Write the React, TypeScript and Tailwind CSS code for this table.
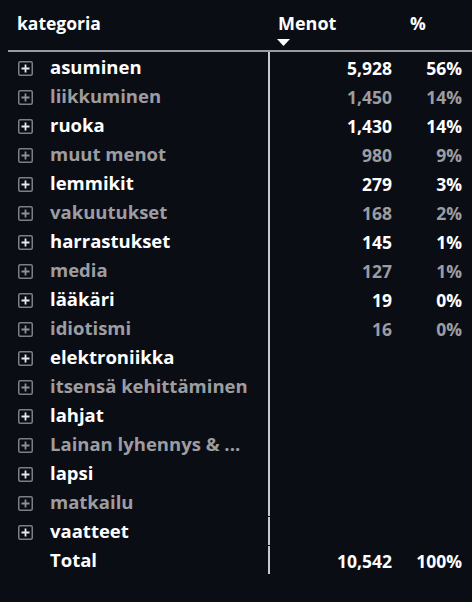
const ROWS: { name: string; value?: string; pct?: string; dim?: boolean }[] = [
  { name: 'asuminen', value: '5,928', pct: '56%' },
  { name: 'liikkuminen', value: '1,450', pct: '14%', dim: true },
  { name: 'ruoka', value: '1,430', pct: '14%' },
  { name: 'muut menot', value: '980', pct: '9%', dim: true },
  { name: 'lemmikit', value: '279', pct: '3%' },
  { name: 'vakuutukset', value: '168', pct: '2%', dim: true },
  { name: 'harrastukset', value: '145', pct: '1%' },
  { name: 'media', value: '127', pct: '1%', dim: true },
  { name: 'lääkäri', value: '19', pct: '0%' },
  { name: 'idiotismi', value: '16', pct: '0%', dim: true },
  { name: 'elektroniikka' },
  { name: 'itsensä kehittäminen', dim: true },
  { name: 'lahjat' },
  { name: 'Lainan lyhennys & ...', dim: true },
  { name: 'lapsi' },
  { name: 'matkailu', dim: true },
  { name: 'vaatteet' },
]

function PlusBox({ dim }: { dim?: boolean }) {
  return (
    <svg width="15" height="15" viewBox="0 0 15 15" className="shrink-0">
      <rect x="0.75" y="0.75" width="13.5" height="13.5" rx="1.5" fill="none" stroke="#7d7f86" strokeWidth="1.5" />
      <path d="M7.5 3.5v8M3.5 7.5h8" stroke={dim ? '#8f9096' : '#e8e8ea'} strokeWidth="1.8" />
    </svg>
  )
}

export default function App() {
  return (
    <div
      className="w-[472px] h-[602px] bg-[#0b0d15] text-white font-bold overflow-hidden"
      style={{ fontFamily: '"Open Sans", "Noto Sans", sans-serif' }}
    >
      {/* header */}
      <div className="flex h-[50px] items-start pt-[10px] text-[17.5px]">
        <div className="w-[268px] pl-[17px]">kategoria</div>
        <div className="w-[124px] pl-[10px] relative text-[18px]">
          Menot
          <svg width="13" height="7" viewBox="0 0 13 7" className="absolute left-[9px] top-[29px]">
            <path d="M0 0h13L6.5 7z" fill="#fff" />
          </svg>
        </div>
        <div className="pl-[18px]">%</div>
      </div>
      <div className="ml-[8px] h-[2px] bg-[#9a9ba0]" />

      {ROWS.map((r, i) => (
        <div key={r.name} className={`flex h-[29px] items-center pt-[3px] text-[17.5px] ${r.dim ? 'text-[#9d9da1]' : 'text-white'}`}>
          <div className="w-[268px] flex items-center gap-[17px] pl-[18px] whitespace-nowrap overflow-hidden text-[18.5px]">
            <PlusBox dim={r.dim} />
            <span className="-mt-[2px]">{r.name}</span>
          </div>
          <div className={`w-[2px] self-stretch -mt-[3px] bg-[#c9cacd] ${i === 16 ? '!mt-[-2px]' : ''}`} />
          <div className="w-[122px] text-right">{r.value}</div>
          <div className="w-[70px] text-right">{r.pct}</div>
        </div>
      ))}
      <div className="flex h-[29px] items-center pt-[3px] text-[17.5px]">
        <div className="w-[268px] pl-[50px] text-[18.5px]">
          <span className="relative -top-[1px]">Total</span>
        </div>
        <div className="w-[2px] self-stretch mt-[-2px] bg-[#c9cacd]" />
        <div className="w-[122px] text-right">10,542</div>
        <div className="w-[70px] text-right">100%</div>
      </div>
    </div>
  )
}
